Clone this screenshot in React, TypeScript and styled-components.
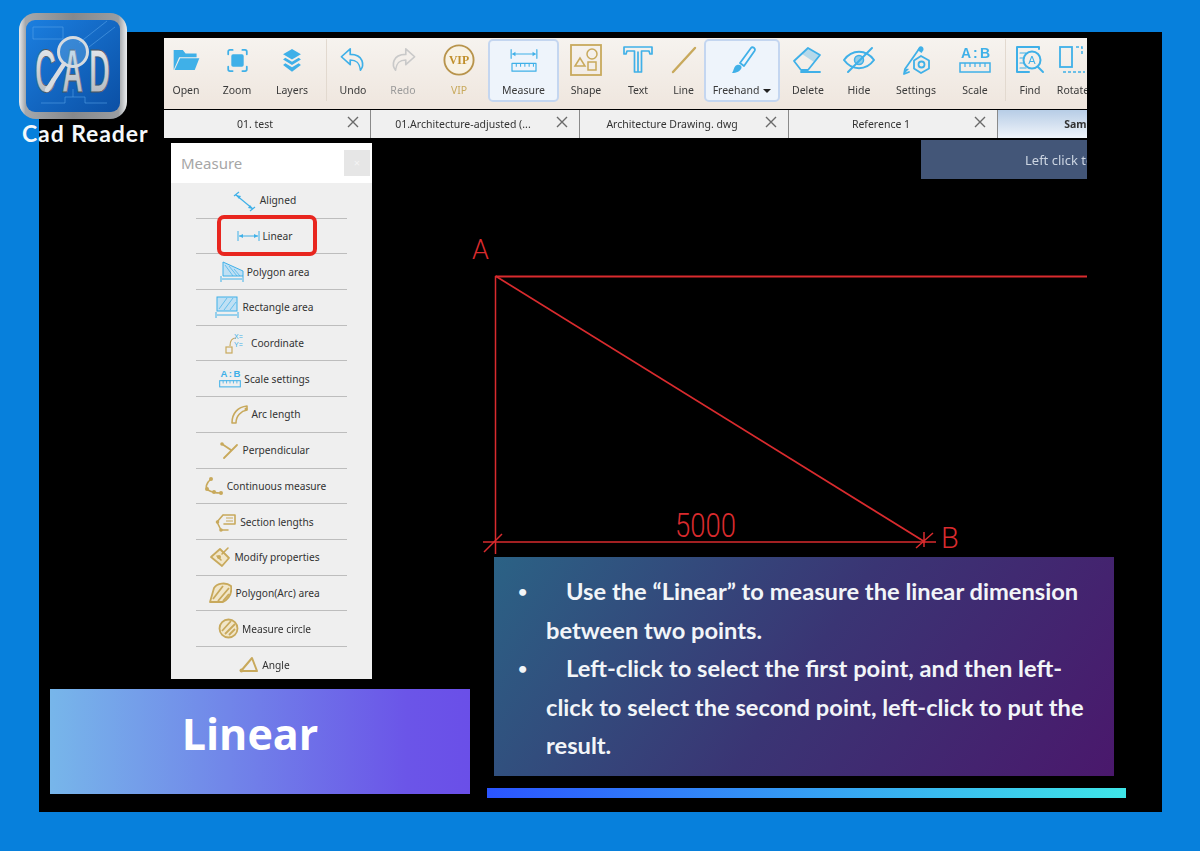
import React from 'react';
import styled, { createGlobalStyle } from 'styled-components';

const GlobalStyle = createGlobalStyle`
  html, body {
    margin: 0;
    padding: 0;
    background: #0780dc;
  }
  * {
    box-sizing: border-box;
  }
`;

const BLUE = '#3fb0e8';
const GOLD = '#c8a95c';

const Page = styled.div`
  position: relative;
  width: 1200px;
  height: 851px;
  padding: 32px 38px 39px 39px;
  background: #0780dc;
  font-family: "Noto Sans", sans-serif;
  overflow: hidden;
`;

const Board = styled.div`
  height: 780px;
  padding-top: 6px;
  background: #000;
  display: flex;
  flex-direction: column;
`;

const LogoBlock = styled.div`
  position: absolute;
  left: 19px;
  top: 13px;
  width: 135px;

  svg {
    display: block;
  }
`;

const LogoCaption = styled.div`
  margin: 1px 0 0 3px;
  font-family: Lato, sans-serif;
  font-size: 23px;
  line-height: 26px;
  font-weight: 700;
  letter-spacing: 0.9px;
  color: #f4f8fb;
  white-space: nowrap;
`;

const AppWindow = styled.div`
  margin-left: 125px;
  width: 923px;
  overflow: hidden;
  filter: blur(0.45px);
`;

const Toolbar = styled.div`
  height: 71px;
  display: flex;
  align-items: stretch;
  background: linear-gradient(180deg, #f6f3ef 0%, #efe6de 100%);
  overflow: hidden;
`;

const ToolItem = styled.div<{ $w: number; $active?: boolean }>`
  flex: 0 0 ${p => p.$w}px;
  height: 63px;
  margin-top: 1px;
  display: flex;
  flex-direction: column;
  align-items: center;
  padding-top: ${p => (p.$active ? 1 : 3)}px;
  border: ${p => (p.$active ? '2px solid #c4d6f0' : 'none')};
  border-radius: 5px;
  background: ${p => (p.$active ? '#eef4fb' : 'transparent')};
`;

const ToolIcon = styled.div`
  height: 36px;
  display: flex;
  align-items: center;
  justify-content: center;
`;

const ToolLabel = styled.span<{ $tone?: string }>`
  margin-top: 5px;
  font-size: 10.5px;
  line-height: 15px;
  color: ${p => p.$tone || '#3a3a3a'};
  white-space: nowrap;
`;

const DropCaret = styled.span`
  display: inline-block;
  margin-left: 4px;
  vertical-align: 1px;
  border-left: 4px solid transparent;
  border-right: 4px solid transparent;
  border-top: 4px solid #222;
`;

const ToolSeparator = styled.div<{ $before: number; $after: number }>`
  flex: 0 0 1px;
  height: 62px;
  margin: 1px ${p => p.$after}px 0 ${p => p.$before}px;
  background: #e2d9cf;
`;

const TabStrip = styled.div`
  height: 28px;
  margin-top: 1px;
  display: flex;
  background: #8a8a8a;
`;

const Tab = styled.div<{ $active?: boolean }>`
  position: relative;
  flex: 0 0 208px;
  margin-right: 1px;
  display: flex;
  align-items: center;
  justify-content: center;
  padding-right: ${p => (p.$active ? 12 : 24)}px;
  font-size: 10.5px;
  font-weight: ${p => (p.$active ? 700 : 400)};
  color: #333;
  white-space: nowrap;
  background: ${p => (p.$active ? 'linear-gradient(180deg, #b7cde6 0%, #f0f4fa 100%)' : '#f0f0f0')};

  &:first-child {
    flex-basis: 206px;
  }
`;

const TabClose = styled.span`
  position: absolute;
  right: 11px;
  top: 6px;
  display: flex;
  color: #6a6a6a;
`;

const Body = styled.div`
  flex: 1;
  display: flex;
  padding-left: 11px;
`;

const LeftColumn = styled.div`
  flex: 0 0 420px;
  display: flex;
  flex-direction: column;
`;

const MeasurePanel = styled.div`
  width: 201px;
  height: 536px;
  margin: 5px 0 0 121px;
  background: #efefef;
  filter: blur(0.45px);
`;

const PanelHeader = styled.div`
  height: 40px;
  display: flex;
  align-items: center;
  justify-content: space-between;
  padding: 0 2px 1px 10px;
  background: #fff;
  font-size: 15px;
  color: #a6a6a6;
`;

const PanelClose = styled.span`
  width: 26px;
  height: 26px;
  display: flex;
  align-items: center;
  justify-content: center;
  background: #e6e6e6;
  color: #f4f4f4;
  font-size: 11px;
`;

const MeasureRow = styled.div`
  position: relative;
  height: 35.7px;
  margin: 0 25px;
  padding-right: 14px;
  display: flex;
  align-items: center;
  justify-content: center;
  gap: 3px;
  border-bottom: 1px solid #bdbdbd;
  font-size: 10.2px;
  color: #333;
  white-space: nowrap;

  &:last-child {
    border-bottom: none;
  }
`;

const RowHighlight = styled.span`
  position: absolute;
  left: 21px;
  top: -4px;
  width: 100px;
  height: 41px;
  border: 4px solid #e8261f;
  border-radius: 7px;
`;

const TitleBanner = styled.div`
  height: 105px;
  margin-top: 10px;
  padding: 0 20px 16px 0;
  display: flex;
  align-items: center;
  justify-content: center;
  background: linear-gradient(90deg, #77b6ea 0%, #6b55e8 85%, #6a4fe8 100%);
  font-family: "Open Sans", sans-serif;
  font-size: 43px;
  font-weight: 700;
  color: #fff;
`;

const RightColumn = styled.div`
  flex: 0 0 639px;
  margin-left: 17px;
  display: flex;
  flex-direction: column;
`;

const HintBar = styled.div`
  width: 166px;
  height: 39px;
  margin: 2px 0 0 434px;
  padding-left: 104px;
  display: flex;
  align-items: center;
  overflow: hidden;
  background: #435678;
  color: #ccd5e2;
  font-size: 13px;
  white-space: nowrap;
  filter: blur(0.35px);
`;

const DrawingSvg = styled.svg`
  display: block;
  margin-top: 56px;
  width: 600px;
  height: 322px;
  flex: none;
  overflow: visible;
`;

const NoteBox = styled.ul`
  width: 620px;
  height: 219px;
  margin: 0 0 0 7px;
  padding: 15px 20px 0 52px;
  list-style: none;
  background: linear-gradient(125deg, #2b6285 0%, #3a3574 50%, #4a186c 100%);
  color: #f2f5f8;
  font-family: Lato, sans-serif;
  font-size: 23.7px;
  font-weight: 700;
  line-height: 38.6px;
`;

const NoteItem = styled.li`
  position: relative;
  text-indent: 20px;

  &::before {
    content: '•';
    position: absolute;
    left: -28px;
    top: 0;
    font-size: 16px;
    text-indent: 0;
  }
`;

const AccentBar = styled.div`
  height: 10px;
  margin-top: 12px;
  background: linear-gradient(90deg, #2b55ff 0%, #3fe6e8 100%);
`;

const stroke = { fill: 'none', strokeWidth: 2, strokeLinecap: 'round', strokeLinejoin: 'round' } as const;

const CadLogo = () => (
  <svg width="108" height="106" viewBox="0 0 108 106">
    <defs>
      <linearGradient id="rim" x1="0" y1="0" x2="1" y2="0">
        <stop offset="0" stopColor="#e8eaec" />
        <stop offset="0.06" stopColor="#a5a8ac" />
        <stop offset="0.5" stopColor="#85888c" />
        <stop offset="0.92" stopColor="#9a9da1" />
        <stop offset="1" stopColor="#eceef0" />
      </linearGradient>
      <linearGradient id="plate" x1="0" y1="0" x2="1" y2="1">
        <stop offset="0" stopColor="#1b7fe0" />
        <stop offset="1" stopColor="#0b4fa4" />
      </linearGradient>
      <linearGradient id="metal" x1="0" y1="0" x2="0" y2="1">
        <stop offset="0" stopColor="#eef1f4" />
        <stop offset="1" stopColor="#a9b0b8" />
      </linearGradient>
    </defs>
    <rect width="108" height="106" rx="17" fill="url(#rim)" />
    <rect x="7" y="7" width="94" height="92" rx="9" fill="url(#plate)" />
    <path d="M14 14h30v12H14zM60 30L88 8M70 34L96 14M22 90h24v-6h20v6h22M54 84v-8" fill="none" stroke="#5aa6ea" strokeWidth="0.8" opacity="0.7" />
    <text
      transform="translate(16 79) scale(0.477 1)"
      fontFamily="'Liberation Sans', sans-serif"
      fontSize="61"
      fontWeight="700"
      letterSpacing="12.6"
      fill="url(#metal)"
      stroke="#4d5660"
      strokeWidth="0.8"
    >
      CAD
    </text>
    <circle cx="54" cy="39" r="14.5" fill="#8cc3f0" fillOpacity="0.3" stroke="#d6dbe0" strokeWidth="3" />
    <path d="M45 51L28 77" stroke="#d9dde1" strokeWidth="4.5" strokeLinecap="round" />
  </svg>
);

const OpenIcon = () => (
  <svg width="29" height="22" viewBox="0 0 30 24">
    <path d="M1 1h10l3 4h12v4H7L1 23z" fill={BLUE} />
    <path d="M8 10h21l-5 13H2z" fill={BLUE} />
  </svg>
);

const ZoomIcon = () => (
  <svg width="23" height="23" viewBox="0 0 24 26">
    <rect x="5" y="6" width="14" height="14" rx="2" fill={BLUE} />
    <path d="M1.5 6V3a2 2 0 0 1 2-2h3M17.5 1h3a2 2 0 0 1 2 2v3M1.500 20v3a2 2 0 0 0 2 2h3M17.500 25h3a2 2 0 0 0 2-2v-3" stroke={BLUE} {...stroke} />
  </svg>
);

const LayersIcon = () => (
  <svg width="20" height="25" viewBox="0 0 22 28">
    <path d="M11 1l10 6-10 6L1 7z" fill={BLUE} />
    <path d="M3.500 11L11 15.500 18.500 11 21 13l-10 6L1 13z" fill={BLUE} />
    <path d="M3.500 17L11 21.500 18.500 17 21 19l-10 7.500L1 19z" fill={BLUE} />
  </svg>
);

const ArrowIcon = ({ color, flip }: { color: string; flip?: boolean }) => (
  <svg width="26" height="26" viewBox="0 0 28 28" style={flip ? { transform: 'scaleX(-1)' } : undefined}>
    <path d="M11 2L1.500 10.500 11 19v-5c6 0 10 2 11 11 4-5 4-17-11-17z" stroke={color} {...stroke} strokeWidth={1.8} />
  </svg>
);

const VipIcon = () => (
  <svg width="32" height="32" viewBox="0 0 34 34">
    <circle cx="17" cy="17" r="15.500" fill="#f8f2e4" stroke="#b8944c" strokeWidth="2" />
    <text x="17" y="21.500" textAnchor="middle" fontFamily="'Liberation Serif', serif" fontSize="12.500" fontWeight="700" fill="#c08f2a">VIP</text>
  </svg>
);

const MeasureIcon = () => (
  <svg width="28" height="24" viewBox="0 0 32 28">
    <path d="M1 2v10M31 2v10M3 7h26" stroke={BLUE} {...stroke} strokeWidth={1.4} />
    <path d="M2 7l4-2.500v5zM30 7l-4-2.500v5z" fill={BLUE} />
    <rect x="2" y="18" width="28" height="9" stroke={BLUE} {...stroke} strokeWidth={1.4} />
    <path d="M7 18v4M12 18v4M17 18v4M22 18v4M27 18v4" stroke={BLUE} strokeWidth="1.200" />
  </svg>
);

const ShapeIcon = () => (
  <svg width="32" height="32" viewBox="0 0 32 32">
    <rect x="1" y="1" width="30" height="30" fill="none" stroke={GOLD} strokeWidth="1.800" />
    <path d="M5 22l5-8 5 8z" fill="none" stroke={GOLD} strokeWidth="1.500" />
    <circle cx="22" cy="10" r="5" fill="none" stroke={GOLD} strokeWidth="1.500" />
    <rect x="18" y="18" width="8" height="8" fill="none" stroke={GOLD} strokeWidth="1.500" />
  </svg>
);

const TextIcon = () => (
  <svg width="30" height="28" viewBox="0 0 30 28">
    <path d="M1 1h28v7h-2l-1-3h-7.500v21h-7V5H4L3 8H1zM15 6v20" stroke={BLUE} {...stroke} strokeWidth={1.7} />
  </svg>
);

const LineIcon = () => (
  <svg width="26" height="28" viewBox="0 0 26 28">
    <path d="M2 26L24 2" stroke={GOLD} strokeWidth="2.400" strokeLinecap="round" />
  </svg>
);

const BrushIcon = () => (
  <svg width="28" height="30" viewBox="0 0 28 30">
    <path d="M12 18L23 3c1.500-2 5 .5 3.500 3L16 21z" stroke={BLUE} {...stroke} strokeWidth={1.800} />
    <path d="M9 20c3-1 5 1 4.500 3-1 3-5 5-9.500 5 2-2 1.500-7 5-8z" fill={BLUE} />
  </svg>
);

const EraserIcon = () => (
  <svg width="32" height="28" viewBox="0 0 32 28">
    <path d="M2 15L16 2l12 7-12 15H9z" stroke={BLUE} {...stroke} strokeWidth={1.800} />
    <path d="M10 8l12 8L28 9 16 2z" fill={BLUE} fillOpacity="0.35" />
    <path d="M9 26h19" stroke={BLUE} {...stroke} strokeWidth={1.800} />
  </svg>
);

const EyeIcon = () => (
  <svg width="32" height="28" viewBox="0 0 32 28">
    <path d="M1 14c8-11 22-11 30 0-8 11-22 11-30 0z" stroke={BLUE} {...stroke} />
    <circle cx="16" cy="14" r="4.500" fill={BLUE} fillOpacity="0.55" stroke={BLUE} strokeWidth="1.500" />
    <path d="M5 26L29 2" stroke={BLUE} {...stroke} />
  </svg>
);

const SettingsIcon = () => (
  <svg width="30" height="30" viewBox="0 0 30 30">
    <path d="M18 4L4 24l-1 5 5-2" stroke={BLUE} {...stroke} strokeWidth={1.800} />
    <path d="M18 2c2-2 5 0 4.500 3l-2 3-4-3z" fill={BLUE} />
    <path d="M3 29c0-4 2-6 5-5z" fill={BLUE} />
    <path d="M20 11l8 4.500v8l-8 4.500-7-4.500v-8z" fill="#f2ece5" stroke={BLUE} strokeWidth="1.800" strokeLinejoin="round" />
    <circle cx="20.500" cy="19.500" r="3" fill="none" stroke={BLUE} strokeWidth="1.800" />
  </svg>
);

const scaleLetter = { y: 12, fontFamily: "'Liberation Sans', sans-serif", fontSize: 14, fontWeight: 700, fill: BLUE } as const;

const ScaleIcon = ({ size = 32 }: { size?: number }) => (
  <svg width={size} height={size * 0.875} viewBox="0 0 32 28">
    <text x="2" {...scaleLetter}>A</text>
    <text x="14" {...scaleLetter}>:</text>
    <text x="21" {...scaleLetter}>B</text>
    <rect x="1" y="17" width="30" height="9" fill="none" stroke={BLUE} strokeWidth="1.500" />
    <path d="M6 17v4M11 17v4M16 17v4M21 17v4M26 17v4" stroke={BLUE} strokeWidth="1.200" />
  </svg>
);

const FindIcon = () => (
  <svg width="30" height="30" viewBox="0 0 30 30">
    <path d="M24 4V2H2v25h12" stroke={BLUE} {...stroke} />
    <path d="M5 8h6M5 13h4M5 18h4M5 23h6" stroke={BLUE} {...stroke} strokeWidth={1.200} />
    <circle cx="17" cy="15" r="8.500" fill="none" stroke={BLUE} strokeWidth="2" />
    <path d="M23 22l5 5" stroke={BLUE} {...stroke} />
    <text x="17" y="19" textAnchor="middle" fontFamily="'Liberation Sans', sans-serif" fontSize="11" fill={BLUE}>A</text>
  </svg>
);

const RotateIcon = () => (
  <svg width="30" height="30" viewBox="0 0 30 30">
    <rect x="2" y="2" width="12" height="20" fill="none" stroke={BLUE} strokeWidth="1.800" />
    <path d="M5 27h22M18 2h6v8" stroke={BLUE} strokeWidth="1.500" strokeDasharray="3 2" fill="none" />
  </svg>
);

const CloseGlyph = () => (
  <svg width="12" height="12" viewBox="0 0 12 12">
    <path d="M1 1l10 10M11 1L1 11" stroke="currentColor" strokeWidth="1.400" />
  </svg>
);

const miniBlue = { fill: 'none', stroke: BLUE, strokeWidth: 1 };
const miniGold = { fill: 'none', stroke: GOLD, strokeWidth: 1.600, strokeLinecap: 'round', strokeLinejoin: 'round' } as const;

const AlignedMini = () => (
  <svg width="24" height="24" viewBox="0 0 24 24">
    <path d="M3 7L20 21M1 8l5-4M17 23l5-4" {...miniBlue} strokeWidth={1.200} />
    <path d="M3 7l5 1-2 3zM20 21l-5-1 2-3z" fill={BLUE} />
  </svg>
);

const LinearMini = () => (
  <svg width="23" height="12" viewBox="0 0 23 12">
    <path d="M1 1v10M22 1v10M2 6h19" {...miniBlue} />
    <path d="M2 6l4-2v4zM21 6l-4-2v4z" fill={BLUE} />
  </svg>
);

const PolygonMini = () => (
  <svg width="24" height="22" viewBox="0 0 24 22">
    <path d="M3 1l20 9v5H3z" fill="#bfe0f4" stroke={BLUE} />
    <path d="M5 4l8 11M9 5l8 10M14 8l6 7" stroke={BLUE} strokeWidth="0.700" />
    <path d="M1 15v6M23 15v6M2 18h20" {...miniBlue} />
  </svg>
);

const RectangleMini = () => (
  <svg width="24" height="22" viewBox="0 0 24 22">
    <rect x="2" y="1" width="20" height="14" fill="#bfe0f4" stroke={BLUE} />
    <path d="M4 13l8-11M9 14l9-12M15 14l6-8" stroke={BLUE} strokeWidth="0.700" />
    <path d="M1 16v6M23 16v6M2 19h20" {...miniBlue} />
  </svg>
);

const CoordinateMini = () => (
  <svg width="23" height="22" viewBox="0 0 23 22">
    <path d="M5 14C5 9 7 6 11 6" fill="none" stroke={GOLD} strokeWidth="1.200" />
    <rect x="1" y="15" width="6" height="6" fill="none" stroke={GOLD} strokeWidth="1.200" />
    <text x="9" y="7" fontFamily="'Liberation Sans', sans-serif" fontSize="7" fill={BLUE}>X=</text>
    <text x="9" y="15" fontFamily="'Liberation Sans', sans-serif" fontSize="7" fill={BLUE}>Y=</text>
  </svg>
);

const ArcMini = () => (
  <svg width="20" height="20" viewBox="0 0 20 20">
    <path d="M3 19C3 9 9 3 18 2v4C12 7 7 12 7 19z" {...miniGold} />
    <circle cx="17" cy="5" r="1.500" fill={GOLD} />
  </svg>
);

const PerpendicularMini = () => (
  <svg width="20" height="20" viewBox="0 0 20 20">
    <path d="M3 4l9 6M18 5L5 18" {...miniGold} strokeWidth={1.800} />
    <circle cx="3" cy="4" r="1.800" fill={GOLD} />
  </svg>
);

const ContinuousMini = () => (
  <svg width="21" height="20" viewBox="0 0 21 20">
    <path d="M8 3C3 7 2 12 5 14c3 2 8 3 13 3" {...miniGold} />
    <circle cx="8" cy="3" r="2" fill={GOLD} />
    <circle cx="4" cy="13" r="2" fill={GOLD} />
    <circle cx="11" cy="16" r="2" fill={GOLD} />
    <circle cx="18" cy="17" r="2" fill={GOLD} />
  </svg>
);

const SectionMini = () => (
  <svg width="22" height="20" viewBox="0 0 22 20">
    <path d="M8 3L2 10l4 8h7M8 3h12v9H9" {...miniGold} />
    <path d="M11 6h7M11 9h7" stroke={GOLD} strokeWidth="1" />
    <circle cx="6" cy="18" r="1.800" fill={GOLD} />
    <circle cx="2.500" cy="10" r="1.800" fill={GOLD} />
  </svg>
);

const ModifyMini = () => (
  <svg width="22" height="22" viewBox="0 0 22 22">
    <path d="M2 11l9-8 9 9-7 8z" fill="#f1e6c9" stroke={GOLD} strokeWidth="1.800" strokeLinejoin="round" />
    <path d="M8 10l4 4M13 8l6-6" {...miniGold} />
    <circle cx="10" cy="11" r="2" fill={GOLD} />
  </svg>
);

const PolygonArcMini = () => (
  <svg width="23" height="22" viewBox="0 0 23 22">
    <path d="M1 20L5 6c3-5 12-6 17-2 1 6-1 12-8 16z" fill="#f1e6c9" stroke={GOLD} strokeWidth="1.800" strokeLinejoin="round" />
    <path d="M4 17L14 4M9 19L20 6M14 19l6-7" stroke={GOLD} strokeWidth="1.800" />
  </svg>
);

const CircleMini = () => (
  <svg width="21" height="21" viewBox="0 0 21 21">
    <circle cx="10.500" cy="10.500" r="9" fill="#f1e6c9" stroke={GOLD} strokeWidth="1.800" />
    <path d="M4 13L13 3M7 16L17 6M11 17l6-6" stroke={GOLD} strokeWidth="1.800" />
  </svg>
);

const AngleMini = () => (
  <svg width="20" height="17" viewBox="0 0 20 17">
    <path d="M2 15L13 2l5 13z" {...miniGold} strokeWidth={2} />
    <circle cx="2.500" cy="14.500" r="2" fill={GOLD} />
  </svg>
);

const tools = [
  { label: 'Open', w: 44, icon: <OpenIcon /> },
  { label: 'Zoom', w: 58, icon: <ZoomIcon /> },
  { label: 'Layers', w: 52, icon: <LayersIcon /> },
  { sep: [8, 3] },
  { label: 'Undo', w: 46, icon: <ArrowIcon color={BLUE} /> },
  { label: 'Redo', w: 54, tone: '#9a9a9a', icon: <ArrowIcon color="#c9c9c9" flip /> },
  { label: 'VIP', w: 58, tone: '#c8a95c', icon: <VipIcon /> },
  { label: 'Measure', w: 71, active: true, icon: <MeasureIcon /> },
  { label: 'Shape', w: 54, icon: <ShapeIcon /> },
  { label: 'Text', w: 50, icon: <TextIcon /> },
  { label: 'Line', w: 41, icon: <LineIcon /> },
  { label: 'Freehand', w: 76, active: true, caret: true, icon: <BrushIcon /> },
  { label: 'Delete', w: 56, icon: <EraserIcon /> },
  { label: 'Hide', w: 46, icon: <EyeIcon /> },
  { label: 'Settings', w: 68, icon: <SettingsIcon /> },
  { label: 'Scale', w: 50, icon: <ScaleIcon /> },
  { sep: [5, 4] },
  { label: 'Find', w: 40, icon: <FindIcon /> },
  { label: 'Rotate', w: 46, icon: <RotateIcon /> },
];

const tabs = ['01. test', '01.Architecture-adjusted (...', 'Architecture Drawing. dwg', 'Reference 1'];

const measures = [
  { label: 'Aligned', icon: <AlignedMini /> },
  { label: 'Linear', icon: <LinearMini />, marked: true },
  { label: 'Polygon area', icon: <PolygonMini /> },
  { label: 'Rectangle area', icon: <RectangleMini /> },
  { label: 'Coordinate', icon: <CoordinateMini /> },
  { label: 'Scale settings', icon: <ScaleIcon size={22} /> },
  { label: 'Arc length', icon: <ArcMini /> },
  { label: 'Perpendicular', icon: <PerpendicularMini /> },
  { label: 'Continuous measure', icon: <ContinuousMini /> },
  { label: 'Section lengths', icon: <SectionMini /> },
  { label: 'Modify properties', icon: <ModifyMini /> },
  { label: 'Polygon(Arc) area', icon: <PolygonArcMini /> },
  { label: 'Measure circle', icon: <CircleMini /> },
  { label: 'Angle', icon: <AngleMini /> },
];

const RED = '#d92b2e';

const App: React.FC = () => (
  <Page>
    <GlobalStyle />
    <Board>
      <AppWindow>
        <Toolbar>
          {tools.map((tool, i) =>
            tool.sep ? (
              <ToolSeparator key={i} $before={tool.sep[0]} $after={tool.sep[1]} />
            ) : (
              <ToolItem key={i} $w={tool.w as number} $active={tool.active}>
                <ToolIcon>{tool.icon}</ToolIcon>
                <ToolLabel $tone={tool.tone}>
                  {tool.label}
                  {tool.caret && <DropCaret />}
                </ToolLabel>
              </ToolItem>
            )
          )}
        </Toolbar>
        <TabStrip>
          {tabs.map(name => (
            <Tab key={name}>
              {name}
              <TabClose>
                <CloseGlyph />
              </TabClose>
            </Tab>
          ))}
          <Tab $active>Sample.dwg</Tab>
        </TabStrip>
      </AppWindow>

      <Body>
        <LeftColumn>
          <MeasurePanel>
            <PanelHeader>
              Measure
              <PanelClose>×</PanelClose>
            </PanelHeader>
            {measures.map(item => (
              <MeasureRow key={item.label}>
                {item.icon}
                {item.label}
                {item.marked && <RowHighlight />}
              </MeasureRow>
            ))}
          </MeasurePanel>
          <TitleBanner>Linear</TitleBanner>
        </LeftColumn>

        <RightColumn>
          <HintBar>Left click to select the first point</HintBar>
          <DrawingSvg viewBox="487 235 600 322">
            <g stroke={RED} fill="none">
              <path d="M495.500 276.500H1087" strokeWidth="2.200" />
              <path d="M495.500 276V554" strokeWidth="1.500" />
              <path d="M495.500 276L925 542" strokeWidth="1.800" />
              <path d="M483 542H936" strokeWidth="1.500" />
              <path d="M484 552L502 534M916 548L933 533M924 532V547" strokeWidth="1.500" />
            </g>
            <g fill={RED} fontFamily="Roboto, sans-serif" fontWeight="300">
              <text x="472" y="259" fontSize="27">A</text>
              <text x="941" y="548" fontSize="29">B</text>
              <text x="675" y="537" fontSize="33" textLength="61" lengthAdjust="spacingAndGlyphs">5000</text>
            </g>
          </DrawingSvg>
          <NoteBox>
            <NoteItem>Use the “Linear” to measure the linear dimension between two points.</NoteItem>
            <NoteItem>Left-click to select the first point, and then left-click to select the second point, left-click to put the result.</NoteItem>
          </NoteBox>
          <AccentBar />
        </RightColumn>
      </Body>
    </Board>

    <LogoBlock>
      <CadLogo />
      <LogoCaption>Cad Reader</LogoCaption>
    </LogoBlock>
  </Page>
);

export default App;
